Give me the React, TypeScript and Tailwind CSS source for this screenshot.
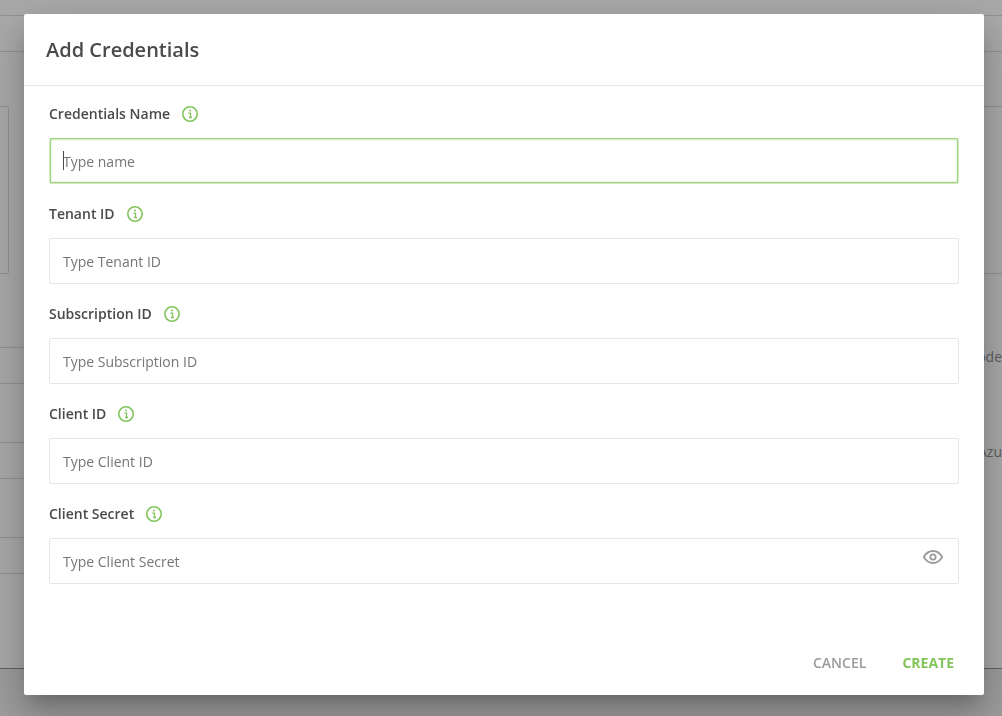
import { useState } from "react";

type Field = {
  id: string;
  label: string;
  placeholder: string;
  secret?: boolean;
};

const fields: Field[] = [
  { id: "name", label: "Credentials Name", placeholder: "Type name" },
  { id: "tenant", label: "Tenant ID", placeholder: "Type Tenant ID" },
  { id: "subscription", label: "Subscription ID", placeholder: "Type Subscription ID" },
  { id: "client", label: "Client ID", placeholder: "Type Client ID" },
  { id: "secret", label: "Client Secret", placeholder: "Type Client Secret", secret: true },
];

function InfoIcon() {
  return (
    <svg viewBox="0 0 16 16" className="size-4 text-[#82c55b]" fill="none" stroke="currentColor" aria-hidden="true">
      <circle cx="8" cy="8" r="7.2" strokeWidth="1.6" />
      <circle cx="8" cy="4.6" r="1" fill="currentColor" stroke="none" />
      <path d="M6.3 7.2H8.5V11.5M7 11.5H10" strokeWidth="1.3" />
    </svg>
  );
}

function EyeIcon() {
  return (
    <svg viewBox="0 0 20 14" className="h-3.5 w-5" fill="none" stroke="currentColor" strokeWidth="1.8" aria-hidden="true">
      <path d="M.8 7C3 3.2 6.2 1 10 1s7 2.2 9.2 6C17 10.8 13.8 13 10 13S3 10.8.8 7Z" strokeLinejoin="round" />
      <circle cx="10" cy="7" r="2.7" />
    </svg>
  );
}

function FieldRow({ field }: { field: Field }) {
  const [value, setValue] = useState("");
  const [visible, setVisible] = useState(false);
  const active = field.id === "name";
  return (
    <div className="flex flex-col gap-3.5">
      <div className="flex h-5 items-center gap-3">
        <label htmlFor={field.id} className="text-sm font-semibold text-[#4a4a4a]">
          {field.label}
        </label>
        <button type="button" aria-label={`About ${field.label}`}>
          <InfoIcon />
        </button>
      </div>
      <div className="relative">
        <input
          id={field.id}
          type={field.secret && !visible ? "password" : "text"}
          value={value}
          onChange={(e) => setValue(e.target.value)}
          placeholder={field.placeholder}
          className={
            active
              ? "block h-[46px] w-full rounded-xs border border-[#d3e8c6] border-t-[#a0d47f] bg-white px-[13px] text-sm text-[#4a4a4a] shadow-[inset_1px_0_0_0_#a0d47f,inset_-1px_-1px_0_0_#a0d47f,inset_0_0_2px_1px_#c6e6b2] outline-none placeholder:text-[#757575]"
              : "block h-[46px] w-full rounded-xs border border-[#e6e6e6] bg-white px-[13px] text-sm text-[#4a4a4a] outline-none placeholder:text-[#757575]"
          }
        />
        {active && value === "" && <span className="absolute top-[13px] left-3.5 h-[19px] w-px bg-[#4a4a4a]" />}
        {field.secret && (
          <button
            type="button"
            aria-label="Show secret"
            onClick={() => setVisible(!visible)}
            className="absolute top-3 right-4 text-[#9b9b9b]"
          >
            <EyeIcon />
          </button>
        )}
      </div>
    </div>
  );
}

function TableRows() {
  return (
    <div className="flex flex-col gap-[58px] pt-[73px]">
      <div className="h-[37px] border-y border-[#d8d8d8]" />
      <div className="h-[37px] border-y border-[#d8d8d8]" />
      <div className="h-[37px] border-y border-[#d8d8d8]" />
    </div>
  );
}

function PageBehind() {
  return (
    <div aria-hidden="true" className="flex min-h-screen flex-col bg-[#e8e8e8]">
      <div className="flex grow flex-col border-b border-[#909090] bg-[#fafafa]">
        <div className="h-[15px]" />
        <div className="h-[37px] border-y border-[#d8d8d8]" />
        <div className="flex pt-[54px]">
          <div className="w-1/2">
            <div className="h-[168px] w-[9px] rounded-r-xs border border-l-0 border-[#d8d8d8]" />
            <TableRows />
          </div>
          <div className="w-1/2">
            <div className="h-[168px] border-y border-[#d8d8d8]" />
            <div className="flex flex-col items-end gap-[75px] overflow-hidden pt-[73px] text-sm leading-5 text-[#8c8c8c]">
              <span>Node</span>
              <span>Azu</span>
            </div>
          </div>
        </div>
      </div>
      <div className="h-[47px]" />
    </div>
  );
}

export default function App() {
  return (
    <div className="relative min-h-screen font-['Open_Sans',sans-serif]">
      <PageBehind />
      <div className="fixed inset-0 overflow-hidden bg-black/32 pt-3.5 pr-[18px] pl-6">
        <form
          role="dialog"
          aria-modal="true"
          aria-labelledby="dialog-title"
          onSubmit={(e) => e.preventDefault()}
          className="rounded-xs bg-white shadow-[0_11px_15px_-7px_rgba(0,0,0,0.2),0_24px_38px_3px_rgba(0,0,0,0.14),0_9px_46px_8px_rgba(0,0,0,0.12)]"
        >
          <header className="flex h-[72px] items-center border-b border-[#e6e6e6] px-[22px]">
            <h1 id="dialog-title" className="text-xl font-semibold text-[#4a4a4a]">
              Add Credentials
            </h1>
          </header>
          <div className="flex flex-col gap-5 px-[25px] pt-[18px]">
            {fields.map((field) => (
              <FieldRow key={field.id} field={field} />
            ))}
          </div>
          <footer className="flex justify-end gap-9 px-[30px] pt-[69px] pb-[22px] text-sm leading-5 font-semibold">
            <button type="button" className="text-[#9b9b9b]">
              CANCEL
            </button>
            <button type="submit" className="font-bold text-[#82c55b]">
              CREATE
            </button>
          </footer>
        </form>
      </div>
    </div>
  );
}
